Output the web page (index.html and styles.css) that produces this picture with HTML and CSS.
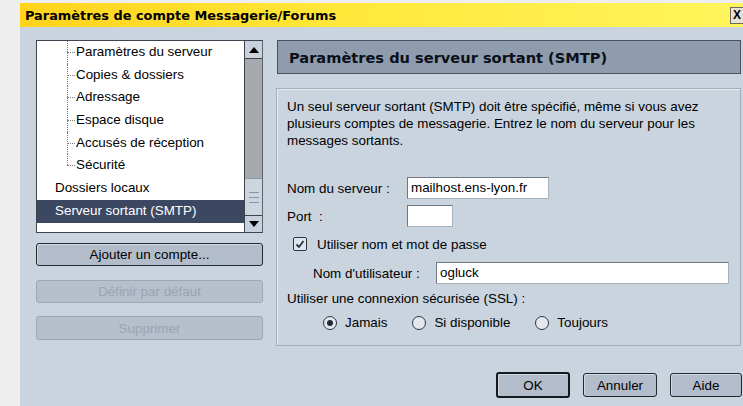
FILE: index.html
```html
<!DOCTYPE html>
<html lang="fr">
<head>
<meta charset="utf-8">
<title>Paramètres de compte Messagerie/Forums</title>
<link rel="stylesheet" href="styles.css">
</head>
<body>
<div class="window">
  <div class="titlebar">
    <span class="title">Paramètres de compte Messagerie/Forums</span>
    <span class="close">X</span>
  </div>
  <div class="main">
    <div class="side">
      <div class="tree">
        <ul class="items">
          <li class="child">Paramètres du serveur</li>
          <li class="child">Copies &amp; dossiers</li>
          <li class="child">Adressage</li>
          <li class="child">Espace disque</li>
          <li class="child">Accusés de réception</li>
          <li class="child last">Sécurité</li>
          <li class="top">Dossiers locaux</li>
          <li class="top selected">Serveur sortant (SMTP)</li>
        </ul>
        <div class="scrollbar">
          <div class="sb-btn up">
            <svg width="10" height="6" viewBox="0 0 10 6"><polygon points="0,6 10,6 5,0" fill="#000"/></svg>
          </div>
          <div class="sb-track"></div>
          <div class="sb-thumb"><span></span><span></span><span></span></div>
          <div class="sb-btn down">
            <svg width="10" height="6" viewBox="0 0 10 6"><polygon points="0,0 10,0 5,6" fill="#000"/></svg>
          </div>
        </div>
      </div>
      <button class="btn btn-add">Ajouter un compte...</button>
      <button class="btn btn-default" disabled>Définir par défaut</button>
      <button class="btn btn-remove" disabled>Supprimer</button>
    </div>
    <div class="pane">
      <div class="pane-header">Paramètres du serveur sortant (SMTP)</div>
      <div class="pane-box">
        <p class="intro">Un seul serveur sortant (SMTP) doit être spécifié, même si vous avez plusieurs comptes de messagerie. Entrez le nom du serveur pour les messages sortants.</p>
        <div class="row row-server">
          <label class="lbl">Nom du serveur :</label>
          <div class="field field-server">mailhost.ens-lyon.fr</div>
        </div>
        <div class="row row-port">
          <label class="lbl">Port&nbsp; :</label>
          <div class="field field-port"></div>
        </div>
        <div class="row row-check">
          <span class="checkbox">
            <svg width="12" height="12" viewBox="0 0 12 12"><polyline points="2.5,6.5 5,9 9.5,3" fill="none" stroke="#2b3340" stroke-width="1.8"/></svg>
          </span>
          <span>Utiliser nom et mot de passe</span>
        </div>
        <div class="row row-user">
          <label class="lbl lbl-user">Nom d'utilisateur :</label>
          <div class="field field-user">ogluck</div>
        </div>
        <div class="ssl-label">Utiliser une connexion sécurisée (SSL) :</div>
        <div class="radios">
          <span class="opt"><span class="radio on"></span>Jamais</span>
          <span class="opt"><span class="radio"></span>Si disponible</span>
          <span class="opt"><span class="radio"></span>Toujours</span>
        </div>
      </div>
    </div>
  </div>
  <div class="footer">
    <button class="btn dlg ok">OK</button>
    <button class="btn dlg">Annuler</button>
    <button class="btn dlg help">Aide</button>
  </div>
</div>
</body>
</html>
```

FILE: styles.css
```css
* { box-sizing: border-box; }

html, body {
  margin: 0;
  padding: 0;
  overflow: hidden;
}

body {
  background: #eeeeee;
  font-family: "Liberation Sans", Arial, sans-serif;
  font-size: 13.4px;
  color: #000;
  padding: 3px 0 0 20px;
}

.window {
  width: 723px;
  height: 403px;
  background: #c9d4df;
  display: flex;
  flex-direction: column;
  overflow: hidden;
}

/* title bar */
.titlebar {
  height: 24px;
  flex: none;
  display: flex;
  align-items: center;
  justify-content: space-between;
  padding-left: 5px;
  background: linear-gradient(to right, #ffd31c 0%, #ffe83a 45%, #fff55c 100%);
}

.title {
  font-family: "DejaVu Sans", Verdana, sans-serif;
  font-weight: bold;
  font-size: 12.9px;
}

.close {
  width: 13px;
  height: 17px;
  border: 1px solid #6d6a60;
  border-right: none;
  background: #e4e1d6;
  font-weight: bold;
  font-size: 12px;
  line-height: 15px;
  padding-left: 2px;
}

/* main area */
.main {
  display: flex;
  gap: 13px;
  padding: 13px 2px 0 16px;
}

.side {
  width: 227px;
  flex: none;
  display: flex;
  flex-direction: column;
}

.tree {
  height: 193px;
  border: 1px solid #3d444e;
  border-right-color: #5a626c;
  background: #fff;
  display: flex;
}

.items {
  list-style: none;
  margin: 0;
  padding: 0;
  flex: 1;
}

.items li {
  height: 22.7px;
  line-height: 22px;
  white-space: nowrap;
  position: relative;
}

.items .child {
  padding-left: 39px;
}

/* dotted connector lines of the tree */
.items .child::before {
  content: "";
  position: absolute;
  left: 30px;
  top: 11px;
  width: 8px;
  border-top: 1px dotted #7c7c7c;
}

.items .child::after {
  content: "";
  position: absolute;
  left: 30px;
  top: 0;
  bottom: 0;
  border-left: 1px dotted #7c7c7c;
}

.items .child.last::after {
  bottom: auto;
  height: 11px;
}

.items .top {
  padding-left: 18px;
}

.items .selected {
  background: #3c4862;
  color: #fff;
}

/* scrollbar */
.scrollbar {
  width: 18px;
  flex: none;
  display: flex;
  flex-direction: column;
  border-left: 1px solid #3d444e;
}

.sb-btn {
  height: 18px;
  flex: none;
  background: #c9d2dc;
  display: flex;
  align-items: center;
  justify-content: center;
  border-bottom: 1px solid #3d444e;
}

.sb-btn.down {
  height: 17px;
  border-bottom: none;
  border-top: 1px solid #3d444e;
}

.sb-track {
  flex: 1;
  background: #a6aaae;
}

.sb-thumb {
  height: 37px;
  flex: none;
  background: #cdd5de;
  border-top: 1px solid #8e98a4;
  display: flex;
  flex-direction: column;
  align-items: center;
  justify-content: center;
  gap: 4px;
}

.sb-thumb span {
  width: 10px;
  height: 1px;
  background: #8797aa;
}

/* buttons */
.btn {
  font-family: inherit;
  font-size: 13.4px;
  color: #000;
  background: #b3bccb;
  border: 1px solid #23272e;
  border-radius: 3px;
  padding: 0;
  height: 23px;
  box-shadow: inset 1px 1px 0 #d3d9e2;
}

.btn:disabled {
  color: #9aa4b1;
  background: #b6bfcc;
  border-color: #9ea7b3;
  box-shadow: none;
}

.btn-add { margin-top: 10px; }
.btn-default { margin-top: 14px; }
.btn-remove { margin-top: 13px; height: 24px; }

/* right pane */
.pane {
  width: 465px;
  flex: none;
  display: flex;
  flex-direction: column;
}

.pane-header {
  height: 34px;
  margin-left: 1px;
  background: #8e9cad;
  border: 1px solid #48525f;
  display: flex;
  align-items: center;
  padding-left: 11px;
  font-family: "DejaVu Sans", Verdana, sans-serif;
  font-size: 14.6px;
  font-weight: bold;
  color: #0a0f18;
}

.pane-box {
  height: 258px;
  margin-top: 14px;
  border: 1px solid #a4adb7;
  box-shadow: inset 1px 1px 0 #e6ebf0;
  padding: 9px 10px 0 10px;
}

.intro {
  margin: 0;
  line-height: 17px;
  width: 436px;
}

.row {
  display: flex;
  align-items: center;
}

.lbl {
  width: 120px;
  flex: none;
}

.field {
  height: 22px;
  background: #fff;
  border: 1px solid #6f7883;
  border-right-color: #a9b1ba;
  border-bottom-color: #a9b1ba;
  padding-left: 3px;
  line-height: 20px;
}

.row-server { margin-top: 28px; }
.field-server { width: 142px; }

.row-port { margin-top: 6px; }
.field-port { width: 46px; }

.row-check {
  margin-top: 8px;
  height: 18px;
  padding-left: 6px;
  gap: 10px;
}

.checkbox {
  width: 14px;
  height: 14px;
  border: 1px solid #2f3640;
  border-radius: 2px;
  background: #dfe5ec;
  display: flex;
  align-items: center;
  justify-content: center;
}

.row-user {
  margin-top: 9px;
  padding-left: 26px;
}

.lbl-user { width: 123px; }
.field-user { width: 293px; }

.ssl-label {
  margin-top: 6px;
  line-height: 17px;
}

.radios {
  margin-top: 7px;
  padding-left: 36px;
  display: flex;
  gap: 25px;
  line-height: 18px;
}

.opt {
  display: flex;
  align-items: center;
  gap: 8px;
}

.radio {
  width: 14px;
  height: 14px;
  border: 1px solid #2f3640;
  border-radius: 50%;
  background: #e2e8ee;
  display: flex;
  align-items: center;
  justify-content: center;
}

.radio.on::after {
  content: "";
  width: 6px;
  height: 6px;
  border-radius: 50%;
  background: #222831;
}

/* dialog buttons */
.footer {
  display: flex;
  justify-content: flex-end;
  align-items: center;
  gap: 13px;
  padding: 26px 1px 0 0;
}

.dlg {
  width: 74px;
  height: 24px;
}

.dlg.ok {
  height: 26px;
  border-width: 2px;
  border-color: #15181d;
}

.dlg.help { width: 72px; }
```
